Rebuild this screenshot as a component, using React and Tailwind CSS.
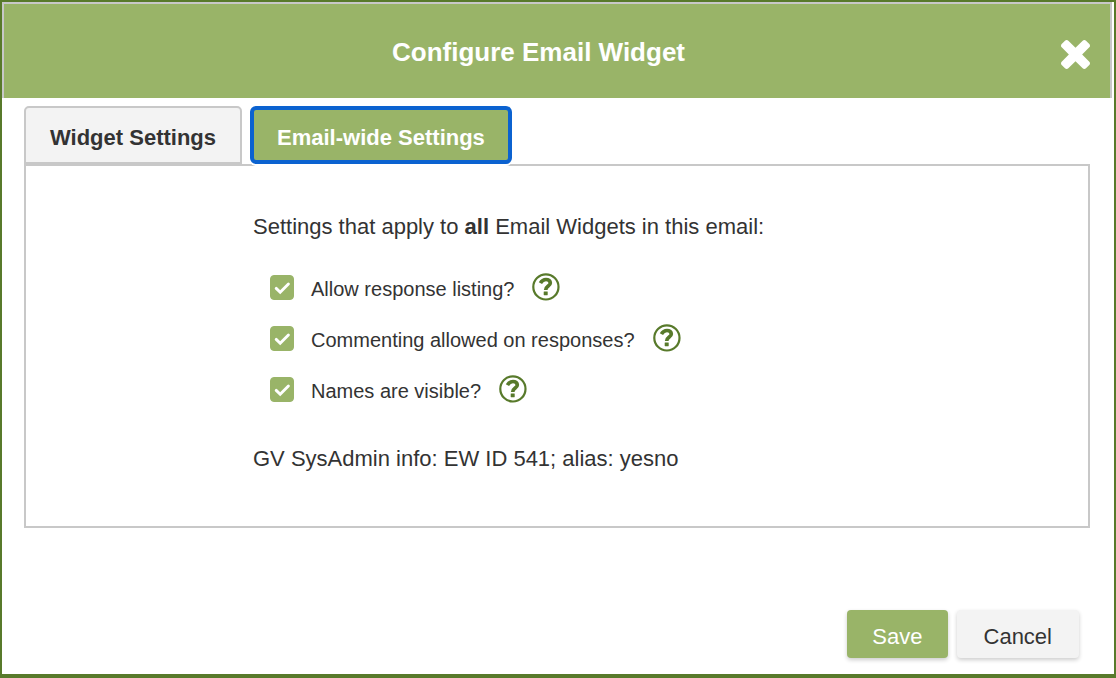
import { useState } from "react";

function CloseIcon() {
  return (
    <svg viewBox="302 366 1188 1188" className="size-[29px] fill-current" aria-hidden="true">
      <path d="M1490 1322q0 40-28 68l-136 136q-28 28-68 28t-68-28l-294-294-294 294q-28 28-68 28t-68-28l-136-136q-28-28-28-68t28-68l294-294-294-294q-28-28-28-68t28-68l136-136q28-28 68-28t68 28l294 294 294-294q28-28 68-28t68 28l136 136q28 28 28 68t-28 68l-294 294 294 294q28 28 28 68z" />
    </svg>
  );
}

function HelpIcon() {
  return (
    <svg viewBox="0 0 28 28" className="size-7" fill="none" stroke="currentColor" aria-hidden="true">
      <circle cx="13.9" cy="13.9" r="12.6" strokeWidth="2.2" />
      <path d="M8.4 10.1C9.8 7.6 11.5 6.5 14 6.5C16.6 6.5 18.3 8 18.3 10C18.3 13.2 13.7 13 13.7 17" strokeWidth="3.7" />
      <rect x="11.7" y="18.4" width="4" height="3.8" rx="0.4" fill="currentColor" stroke="none" />
    </svg>
  );
}

function Setting({ id, label }) {
  const [checked, setChecked] = useState(true);
  return (
    <li className="flex items-center">
      <span className="relative flex">
        <input
          id={id}
          type="checkbox"
          checked={checked}
          onChange={(e) => setChecked(e.target.checked)}
          className="h-[25px] w-6 appearance-none rounded border border-[#99b468] checked:bg-[#99b468]"
        />
        {checked && (
          <svg viewBox="0 0 24 25" className="pointer-events-none absolute inset-0" fill="none" stroke="#fff" strokeWidth="2.9" strokeLinecap="round" strokeLinejoin="miter" aria-hidden="true">
            <path d="M6.2 13.4l4 3.8 8.2-8.2" />
          </svg>
        )}
      </span>
      <label htmlFor={id} className="mt-1 ml-[17px] text-[20px] leading-6">{label}</label>
      <button type="button" aria-label={"Help: " + label} className="ml-[18px] text-[#587a2b]">
        <HelpIcon />
      </button>
    </li>
  );
}

export default function App() {
  return (
    <div role="dialog" aria-labelledby="title" className="flex min-h-screen flex-col border-2 border-b-4 border-[#587a2b] bg-white font-['Liberation_Sans',Arial,sans-serif] text-[22px] leading-7 text-[#333]">
      <header className="mr-0.5 flex h-24 items-center border-2 border-b-0 border-[#c8c8c8] bg-[#99b468] pr-5 pl-3 text-white">
        <h1 id="title" className="flex-1 pt-0.5 text-center text-[26px] leading-8 font-bold">Configure Email Widget</h1>
        <button type="button" aria-label="Close" className="mt-1.5">
          <CloseIcon />
        </button>
      </header>

      <main className="px-[22px] pr-6 pt-2">
        <div role="tablist" className="flex gap-2 font-bold">
          <button type="button" role="tab" aria-selected="false" className="h-[58px] rounded-t-[5px] border-2 border-[#c8c8c8] bg-[#f3f3f3] px-6 pt-1.5">
            Widget Settings
          </button>
          <button type="button" role="tab" aria-selected="true" className="relative h-[58px] rounded-md border-4 border-[#0b62d0] bg-[#99b468] px-[23px] pt-1.5 text-white shadow-[0_2px_0_#fff]">
            Email-wide Settings
          </button>
        </div>
        <section role="tabpanel" className="border-2 border-[#c8c8c8] pt-[47px] pb-[53px] pl-[227px]">
          <p>
            Settings that apply to <b>all</b> Email Widgets in this email:
          </p>
          <ul className="mt-8 flex flex-col gap-[23px] pl-[17px]">
            <Setting id="listing" label="Allow response listing?" />
            <Setting id="commenting" label="Commenting allowed on responses?" />
            <Setting id="names" label="Names are visible?" />
          </ul>
          <p className="mt-[42px]">GV SysAdmin info: EW ID 541; alias: yesno</p>
        </section>
      </main>

      <footer className="mt-auto flex justify-end gap-[9px] pr-[35px] pb-4">
        <button type="button" className="h-12 rounded bg-[#99b468] px-[25px] pt-1.5 text-white shadow-[0_2px_4px_rgba(0,0,0,0.2)]">Save</button>
        <button type="button" className="h-12 rounded bg-[#f3f3f3] px-[27px] pt-1.5 shadow-[0_2px_4px_rgba(0,0,0,0.2)]">Cancel</button>
      </footer>
    </div>
  );
}
